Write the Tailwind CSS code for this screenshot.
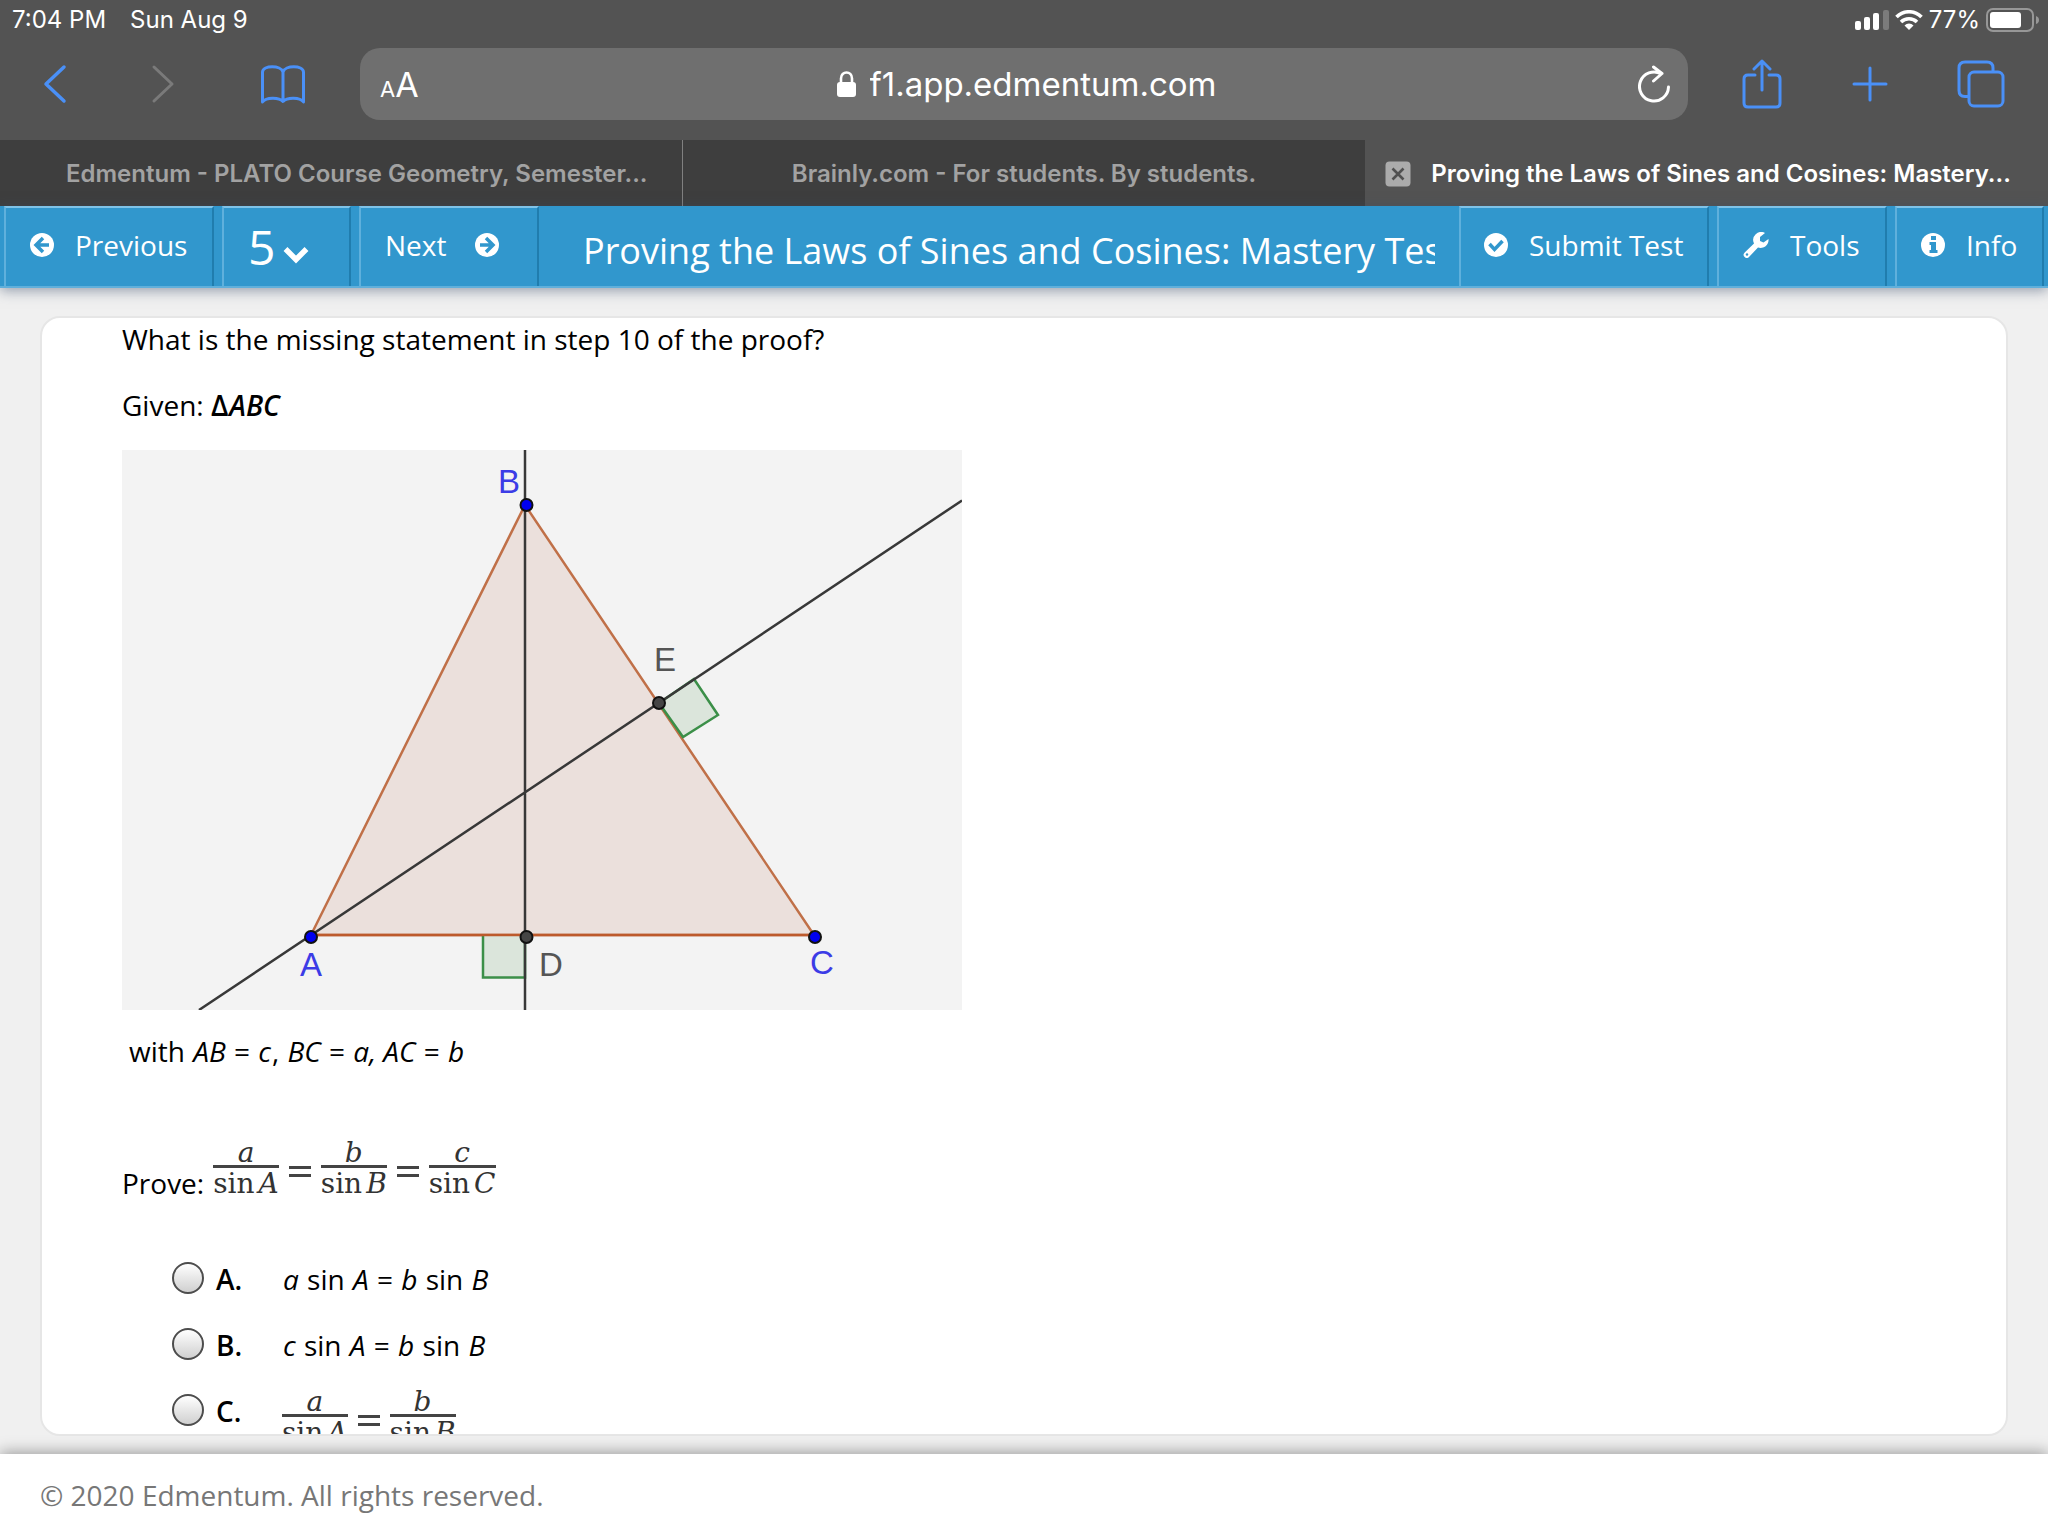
<!DOCTYPE html>
<html lang="en">
<head>
<meta charset="utf-8">
<meta name="viewport" content="width=device-width, initial-scale=1">
<title>Proving the Laws of Sines and Cosines: Mastery Test</title>
<script src="https://cdn.jsdelivr.net/npm/@tailwindcss/browser@4"></script>
</head>
<body class="flex h-screen flex-col overflow-hidden bg-[#f0f0f0] font-['Open_Sans',sans-serif] text-[28px] text-black">

<!-- Browser chrome -->
<header class="shrink-0 bg-[#535353] font-['Inter',sans-serif] text-white">
  <div class="flex h-10 items-center justify-between pr-2 pl-3 text-2xl">
    <div class="flex gap-6"><span>7:04 PM</span><span>Sun Aug 9</span></div>
    <div class="flex items-center gap-[6px]">
      <svg class="h-5 w-[34px]" viewBox="0 0 34 20" fill="#fff"><rect x="0" y="11" width="6" height="9" rx="2"/><rect x="9" y="7" width="6" height="13" rx="2"/><rect x="18" y="3" width="6" height="17" rx="2"/><rect x="28" y="0" width="6" height="20" rx="2" fill="#7b7b7b"/></svg>
      <svg class="h-5 w-7" viewBox="0 0 28 20" fill="none" stroke="#fff" stroke-width="3.6"><path d="M1.5 7A17.5 17.5 0 0 1 26.500 7"/><path d="M6 12a11.500 11.500 0 0 1 16 0"/><path d="M14 20l-4.500-4.600a6.500 6.500 0 0 1 9 0z" fill="#fff" stroke="none"/></svg>
      <span>77%</span>
      <svg class="h-6 w-[54px]" viewBox="0 0 54 24"><rect x="1" y="1" width="46" height="22" rx="6" fill="none" stroke="#979797" stroke-width="2"/><rect x="4" y="4" width="31" height="16" rx="3" fill="#fff"/><path d="M50 8q3 1 3 4t-3 4z" fill="#979797"/></svg>
    </div>
  </div>
  <div class="flex h-[100px] items-start pt-2">
    <nav class="flex h-[72px] w-[360px] shrink-0 items-center pl-[42px]" aria-label="History">
      <button aria-label="Back"><svg class="h-10 w-[26px]" viewBox="0 0 26 40" fill="none" stroke="#4a90f7" stroke-width="3.500" stroke-linecap="round" stroke-linejoin="round"><path d="M22 3L4 20l18 17"/></svg></button>
      <button class="ml-[82px]" aria-label="Forward"><svg class="h-10 w-[26px]" viewBox="0 0 26 40" fill="none" stroke="#7a7a7a" stroke-width="3" stroke-linecap="round" stroke-linejoin="round"><path d="M4 3l18 17L4 37"/></svg></button>
      <button class="ml-[84px]" aria-label="Bookmarks"><svg class="h-10 w-[46px]" viewBox="0 0 46 40" fill="none" stroke="#4a90f7" stroke-width="3" stroke-linejoin="round"><path d="M23 8C21 1 3 1 2.500 8v30C6 33 19 33 23 37.500 27 33 40 33 43.500 38V8C43 1 25 1 23 8zV37"/></svg></button>
    </nav>
    <div class="flex h-[72px] flex-1 items-center justify-between rounded-[20px] bg-[#6f6f6f] pr-[18px] pl-5">
      <button class="flex w-8 items-baseline" aria-label="Page settings"><span class="text-[22px]">A</span><span class="text-[34px]">A</span></button>
      <label class="flex items-center gap-3">
        <svg class="h-7 w-6" viewBox="0 0 24 28"><rect x="3" y="12" width="19" height="15" rx="3" fill="#fff"/><path d="M7 13V8.500c0-8 11-8 11 0V13" fill="none" stroke="#fff" stroke-width="2.600"/></svg>
        <span class="sr-only">Address</span>
        <input type="text" value="f1.app.edmentum.com" class="field-sizing-content bg-transparent text-[33px] leading-[56px]">
      </label>
      <button aria-label="Reload"><svg class="h-10 w-8" viewBox="0 0 32 40" fill="none" stroke="#fff" stroke-width="3" stroke-linecap="round" stroke-linejoin="round"><path d="M30.500 23A14.500 14.500 0 1 1 23 9.800M15.500 3l8.500 6.500-8.500 7.500"/></svg></button>
    </div>
    <div class="flex h-[72px] w-[360px] shrink-0 items-center justify-between pr-[43px] pl-[54px]">
      <button aria-label="Share"><svg class="h-[50px] w-10" viewBox="0 0 40 50" fill="none" stroke="#4a90f7" stroke-width="3" stroke-linecap="round" stroke-linejoin="round"><path d="M13 16H6q-4 0-4 4v24q0 4 4 4h28q4 0 4-4V20q0-4-4-4h-7M20 31V2M12 10l8-8 8 8"/></svg></button>
      <button aria-label="New tab"><svg class="h-9 w-9" viewBox="0 0 36 36" fill="none" stroke="#4a90f7" stroke-width="3" stroke-linecap="round"><path d="M18 2v32M2 18h32"/></svg></button>
      <button aria-label="Show tabs"><svg class="h-12 w-12" viewBox="0 0 48 48" fill="none" stroke="#4a90f7" stroke-width="3" stroke-linejoin="round"><path d="M12 36.500H8q-6 0-6-6V8q0-6 6-6h22q6 0 6 6v4"/><rect x="12" y="12" width="34" height="34" rx="5"/></svg></button>
    </div>
  </div>
  <nav class="grid h-[66px] grid-cols-3 text-2xl font-semibold" aria-label="Tabs">
    <a href="#" class="flex items-center border-r border-[#808080] bg-[#3e3e3e] pt-0.5 pl-[66px] whitespace-nowrap text-[#a2a2a2]">Edmentum - PLATO Course Geometry, Semester...</a>
    <a href="#" class="flex items-center justify-center bg-[#3e3e3e] pt-0.5 whitespace-nowrap text-[#a2a2a2]">Brainly.com - For students. By students.</a>
    <div class="flex items-center gap-5 pt-0.5 pl-5">
      <button aria-label="Close tab"><svg class="size-[26px]" viewBox="0 0 26 26"><rect width="25" height="25" x=".5" y=".5" rx="4" fill="#ababab"/><path d="M7.500 7.500l11 11m0-11l-11 11" stroke="#505050" stroke-width="2.600"/></svg></button>
      <a href="#" class="whitespace-nowrap">Proving the Laws of Sines and Cosines: Mastery...</a>
    </div>
  </nav>
</header>

<!-- Test toolbar -->
<div class="relative flex h-[82px] shrink-0 border-b-2 border-[#5fafdb] bg-[#3197cd] pr-1 pl-1 text-white shadow-[0_3px_12px_rgba(60,80,110,0.5)]">
  <button class="flex w-[210px] items-center gap-[21px] border-t-2 border-r-2 border-l-2 border-t-[#7fc3e8] border-r-[#207dae] border-l-[#5fb0dc] pb-1 pl-6">
    <svg class="size-6" viewBox="0 0 24 24"><circle cx="12" cy="12" r="12" fill="#fff"/><path d="M13 5l-7 7 7 7M7 12h12" fill="none" stroke="#3197cd" stroke-width="3.500"/></svg>Previous</button>
  <label class="ml-2 flex w-[129px] items-center gap-2 border-t-2 border-r-2 border-l-2 border-t-[#7fc3e8] border-r-[#207dae] border-l-[#5fb0dc] pl-6">
    <span class="sr-only">Question</span>
    <select class="field-sizing-content h-[70px] appearance-none bg-transparent text-5xl leading-[70px]"><option>5</option></select>
    <svg class="mt-4 h-[18px] w-[26px] shrink-0" viewBox="0 0 26 18" fill="none" stroke="#fff" stroke-width="5.500"><path d="M2.500 3L13 13.500 23.500 3"/></svg>
  </label>
  <button class="ml-2 flex w-[180px] items-center gap-[29px] border-t-2 border-r-2 border-l-2 border-t-[#7fc3e8] border-r-[#207dae] border-l-[#5fb0dc] pb-1 pl-6">Next
    <svg class="size-6" viewBox="0 0 24 24"><circle cx="12" cy="12" r="12" fill="#fff"/><path d="M11 5l7 7-7 7M17 12H5" fill="none" stroke="#3197cd" stroke-width="3.500"/></svg></button>
  <div class="min-w-0 flex-1 pt-[18px] pr-6 pl-11"><h1 class="overflow-hidden text-4xl leading-[54px] whitespace-nowrap">Proving the Laws of Sines and Cosines: Mastery Test</h1></div>
  <button class="flex w-[250px] items-center gap-[21px] border-t-2 border-r-2 border-l-2 border-t-[#7fc3e8] border-r-[#207dae] border-l-[#5fb0dc] pb-1 pl-[23px] whitespace-nowrap">
    <svg class="size-6 shrink-0" viewBox="0 0 24 24"><circle cx="12" cy="12" r="12" fill="#fff"/><path d="M5.500 11l5 5.500L18.500 8" fill="none" stroke="#3197cd" stroke-width="3.500"/></svg>Submit Test</button>
  <button class="ml-2 flex w-[170px] items-center gap-[21px] border-t-2 border-r-2 border-l-2 border-t-[#7fc3e8] border-r-[#207dae] border-l-[#5fb0dc] pb-1 pl-6">
    <svg class="size-[26px]" viewBox="0 0 26 26"><path d="M25.500 7a8 8 0 0 1-10.500 8.500L6 25c-1.500 1.500-3 1.300-4.300 0-1.600-1.500-1.600-3 0-4.500l9.300-9A8 8 0 0 1 22 1l-5 4v4l3.500 1.500z" fill="#fff"/><circle cx="4" cy="22.500" r="1.200" fill="#3197cd"/></svg>Tools</button>
  <button class="ml-2 flex w-[149px] items-center gap-[21px] border-t-2 border-r-2 border-l-2 border-t-[#7fc3e8] border-r-[#207dae] border-l-[#5fb0dc] pb-1 pl-6">
    <svg class="size-6" viewBox="0 0 24 24"><circle cx="12" cy="12" r="12" fill="#fff"/><path d="M10 3h5v4h-5zM8.500 9H15v8h1.500v3h-8v-3H10v-5H8.500z" fill="#3197cd"/></svg>Info</button>
</div>

<!-- Question -->
<main class="flex min-h-0 flex-1 flex-col px-10 pt-7 pb-[18px]">
  <div class="min-h-0 flex-1 overflow-hidden rounded-[20px] border-2 border-[#e6e6e6] bg-white px-20 leading-[38px]">
    <p class="mt-0.5">What is the missing statement in step 10 of the proof?</p>
    <p class="mt-7">Given: <b class="font-semibold">Δ<i class="px-px">ABC</i></b></p>
    <svg class="mt-[26px] block h-[560px] w-[840px]" viewBox="0 0 840 560" font-family="Liberation Sans, sans-serif" font-size="33">
      <rect width="840" height="560" fill="#f3f3f3"/>
      <path d="M189 485L403 55 692 485z" fill="#ebe0dc" stroke="#c07048" stroke-width="2.500"/>
      <path d="M361 485v42.500h42V485M537 253l35-24 24 36-35 22z" fill="#dbe5db" stroke="#3b8f48" stroke-width="2.500"/>
      <path d="M189 485H692" stroke="#bd5a2c" stroke-width="2.500"/>
      <path d="M403 0V560M77 560L840 50.500" stroke="#383838" stroke-width="2.500" fill="none"/>
      <g fill="#0000f0" stroke="#111" stroke-width="2"><circle cx="404.500" cy="55" r="6"/><circle cx="189" cy="487" r="6"/><circle cx="693" cy="487" r="6"/></g>
      <g fill="#454545" stroke="#111" stroke-width="2"><circle cx="404.500" cy="487" r="6"/><circle cx="537" cy="253" r="6"/></g>
      <g fill="#3c3ce6"><text x="376" y="43">B</text><text x="178" y="526">A</text><text x="688" y="524">C</text></g>
      <g fill="#555"><text x="417" y="526">D</text><text x="532" y="221">E</text></g>
    </svg>
    <p class="mt-[22px] pl-[7px]">with <i class="px-px">AB</i> = <i class="px-px">c</i>, <i class="px-px">BC</i> = <i class="px-px">a, AC</i> = <i class="px-px">b</i></p>
    <div class="mt-[71px] flex items-end">
      <span>Prove:</span>
      <div class="ml-[9px] flex items-center gap-[10px] pb-1 font-['DejaVu_Serif',serif] text-[28px] leading-7 text-[#333]">
        <div class="text-center"><i class="block leading-6">a</i><span class="block border-t-[3px] border-[#444] pt-0.5">sin<i class="ml-1">A</i></span></div>
        <span class="mt-1 h-[11px] w-[22px] border-y-[3px] border-[#444]"></span>
        <div class="text-center"><i class="block leading-6">b</i><span class="block border-t-[3px] border-[#444] pt-0.5">sin<i class="ml-1">B</i></span></div>
        <span class="mt-1 h-[11px] w-[22px] border-y-[3px] border-[#444]"></span>
        <div class="text-center"><i class="block leading-6">c</i><span class="block border-t-[3px] border-[#444] pt-0.5">sin<i class="ml-1">C</i></span></div>
      </div>
    </div>
    <div class="mt-[60px] flex flex-col gap-7 pl-[50px] leading-[34px]">
      <label class="flex h-[38px]">
        <input type="radio" name="answer" class="size-8 appearance-none rounded-full border-2 border-[#4d4d4d] bg-linear-to-b from-white to-[#d0d0d0]">
        <b class="w-[78px] pl-3 font-semibold">A.</b><span class="whitespace-nowrap"><i class="px-px">a</i> sin <i class="px-px">A</i> = <i class="px-px">b</i> sin <i class="px-px">B</i></span>
      </label>
      <label class="flex h-[38px]">
        <input type="radio" name="answer" class="size-8 appearance-none rounded-full border-2 border-[#4d4d4d] bg-linear-to-b from-white to-[#d0d0d0]">
        <b class="w-[78px] pl-3 font-semibold">B.</b><span class="whitespace-nowrap"><i class="px-px">c</i> sin <i class="px-px">A</i> = <i class="px-px">b</i> sin <i class="px-px">B</i></span>
      </label>
      <label class="flex h-[38px]">
        <input type="radio" name="answer" class="size-8 appearance-none rounded-full border-2 border-[#4d4d4d] bg-linear-to-b from-white to-[#d0d0d0]">
        <b class="w-[78px] pl-3 font-semibold">C.</b>
        <span class="-mt-1 flex items-center gap-[10px] self-start font-['DejaVu_Serif',serif] text-[28px] leading-7 text-[#333]">
          <span class="text-center"><i class="block leading-6">a</i><span class="block border-t-[3px] border-[#444] pt-0.5">sin<i class="ml-1">A</i></span></span>
          <span class="mt-1 h-[11px] w-[22px] border-y-[3px] border-[#444]"></span>
          <span class="text-center"><i class="block leading-6">b</i><span class="block border-t-[3px] border-[#444] pt-0.5">sin<i class="ml-1">B</i></span></span>
        </span>
      </label>
    </div>
  </div>
</main>

<footer class="relative flex h-[82px] shrink-0 items-center bg-white px-10 text-[#777] shadow-[0_-2px_14px_rgba(0,0,0,0.35)]">© 2020 Edmentum. All rights reserved.</footer>
</body>
</html>
